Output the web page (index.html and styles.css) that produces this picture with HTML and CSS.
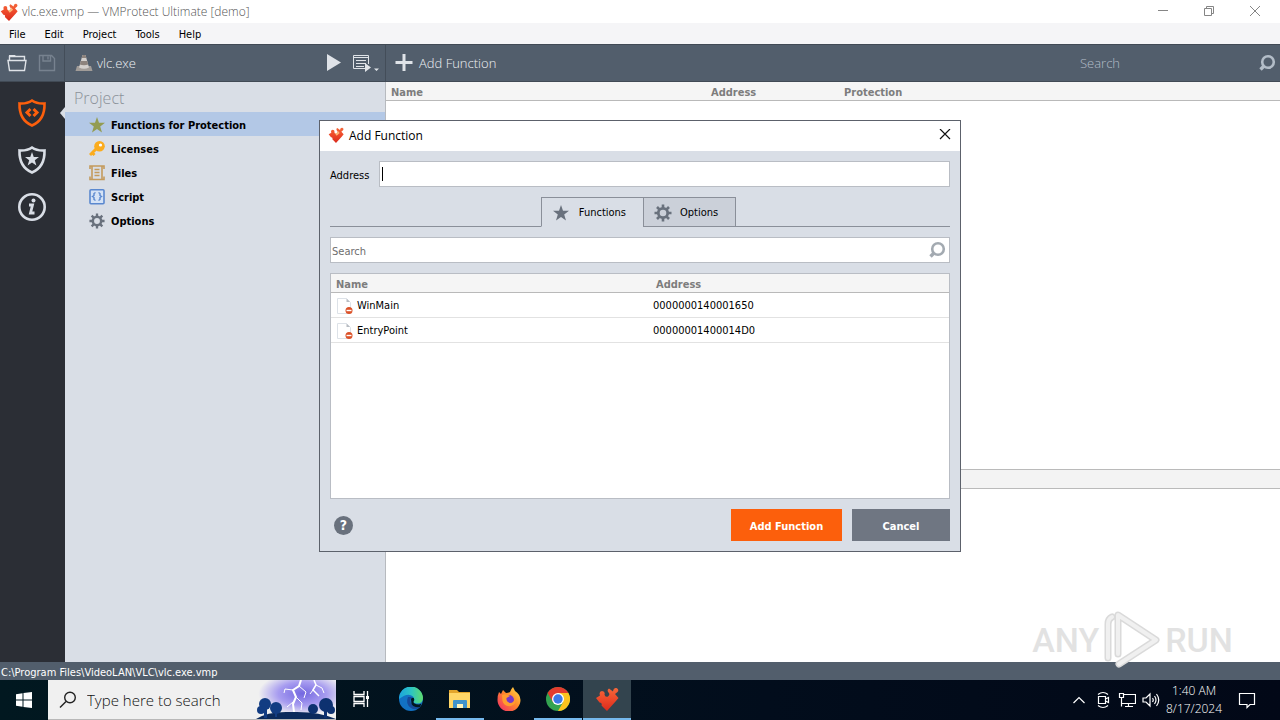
FILE: index.html
```html
<!DOCTYPE html>
<html lang="en">
<head>
<meta charset="utf-8">
<title>vlc.exe.vmp — VMProtect Ultimate [demo]</title>
<link rel="stylesheet" href="styles.css">
</head>
<body>
<svg class="defs" aria-hidden="true">
  <linearGradient id="gPuzzle" x1="0" y1="0" x2="0" y2="1"><stop offset="0" stop-color="#f4683a"/><stop offset=".45" stop-color="#ee4b2b"/><stop offset="1" stop-color="#d92a1c"/></linearGradient>
  <linearGradient id="gEdge" x1="0" y1="0" x2="1" y2="0"><stop offset="0" stop-color="#1ba4dd"/><stop offset=".5" stop-color="#2cc4c4"/><stop offset="1" stop-color="#5fdc6c"/></linearGradient>
  <linearGradient id="gFox" x1="1" y1="0" x2="0" y2="1"><stop offset="0" stop-color="#ffe34a"/><stop offset=".45" stop-color="#ff8a2a"/><stop offset="1" stop-color="#f0246c"/></linearGradient>
  <radialGradient id="gSky" cx=".58" cy=".35" r=".55"><stop offset="0" stop-color="#7468e0"/><stop offset=".55" stop-color="#a79cf0"/><stop offset="1" stop-color="#f0f0f0"/></radialGradient>
  <symbol id="puzzle" viewBox="0 0 24 24">
    <path fill="url(#gPuzzle)" d="M1 11 L5 8.500 Q3.500 4.500 7 4 Q10.500 4.500 9.500 7.500 Q10 10.500 13 9.500 Q15.500 7.500 13.500 5.500 Q11.500 3 14 1.500 L18 4.500 Q18.500 .5 21.500 1 Q24.500 2.500 22.500 5 L20 7 L23.500 11 L20.500 14.500 L12 24 L6.500 18.500 Q7.500 15.500 4.500 15.500 Z"/>
  </symbol>
  <symbol id="puzzle-lit" viewBox="0 0 24 24">
    <use href="#puzzle"/>
    <path fill="#ffd08a" opacity=".8" d="M10 9 Q14 10.500 15 6 L17.500 9 L13 13 Z"/>
  </symbol>
  <symbol id="star" viewBox="0 0 16 16"><path fill="currentColor" d="M8 0 L10 5.700 L16 5.800 L11.200 9.500 L13 15.500 L8 12 L3 15.500 L4.800 9.500 L0 5.800 L6 5.700 Z"/></symbol>
  <symbol id="gear" viewBox="0 0 18 18"><circle cx="9" cy="9" r="4.700" fill="none" stroke="currentColor" stroke-width="2.800"/><path stroke="currentColor" stroke-width="2.600" d="M9 .5V4M9 14V17.500M.5 9H4M14 9H17.500M3 3L5.500 5.500M12.500 12.500L15 15M15 3L12.500 5.500M3 15L5.500 12.500"/></symbol>
  <symbol id="lens" viewBox="0 0 18 18"><circle cx="10" cy="8" r="5.800" fill="none" stroke="currentColor" stroke-width="2.600"/><path stroke="currentColor" stroke-width="3.400" d="M6 12L2.500 15.500"/></symbol>
  <symbol id="shield" viewBox="0 0 30 30"><path fill="none" stroke="currentColor" stroke-width="2.600" stroke-linejoin="miter" d="M15 2.500 Q10 6 2.500 5.500 Q2 22 15 27.500 Q28 22 27.500 5.500 Q20 6 15 2.500 Z"/></symbol>
  <symbol id="doc" viewBox="0 0 18 18"><path fill="#fff" stroke="#dde2e8" d="M1.500 1.500H10.500L14.500 5.500V16.500H1.500Z"/><path fill="#b8bcc2" d="M10.500 1.500V5H14Z"/><circle cx="13" cy="13.500" r="3.500" fill="#dc5228"/><path stroke="#fff" stroke-width="1.400" d="M10.500 13.500H15.500"/></symbol>
</svg>

<div class="app">
  <header class="titlebar">
    <svg class="i18"><use href="#puzzle-lit"/></svg>
    <h1>vlc.exe.vmp — VMProtect Ultimate [demo]</h1>
    <div class="wincontrols">
      <button aria-label="Minimize"><svg class="i12" viewBox="0 0 12 12"><path d="M1 4.500H11"/></svg></button>
      <button aria-label="Restore"><svg class="i12" viewBox="0 0 12 12"><path d="M1.500 2.500H8.500V9.500H1.500ZM3.500 2.500V.5H10.500V7.500H8.500"/></svg></button>
      <button aria-label="Close"><svg class="i12" viewBox="0 0 12 12"><path d="M1 0L11 10M11 0L1 10"/></svg></button>
    </div>
  </header>
  <nav class="menubar">
    <button>File</button><button>Edit</button><button>Project</button><button>Tools</button><button>Help</button>
  </nav>
  <div class="toolbar">
    <div class="tool-files">
      <button aria-label="Open"><svg class="i20" viewBox="0 0 20 20"><path fill="none" stroke="#dfe3e8" stroke-width="1.400" d="M2.500 7V3.500H17.500V7M1 7.500H19L17.500 17.500H2.500Z"/><path fill="#dfe3e8" d="M2 2H8L9.500 4H2Z"/></svg></button>
      <button aria-label="Save"><svg class="i20" viewBox="0 0 20 20"><path fill="none" stroke="#77828f" stroke-width="1.400" d="M2.500 2.500H14.500L17.500 5.500V17.500H2.500ZM6 2.500V8H13.500V2.500M11 3.500V6.500"/></svg></button>
    </div>
    <div class="tool-project">
      <svg class="i18" viewBox="0 0 18 18"><path fill="#a19c98" d="M2 12H16L17.500 17H.5Z"/><path fill="#d4d0cd" d="M7.500 1H10.500L14 13.500Q9 16 4 13.500Z"/><path fill="#8d837d" d="M7.500 1H10.500L11.300 4H6.700ZM5.800 7H12.200L13.200 10.500Q9 12 4.800 10.500Z"/></svg>
      <span class="grow">vlc.exe</span>
      <button aria-label="Run"><svg class="i18" viewBox="0 0 18 18"><path fill="#dfe3e8" d="M2 0L16 8.500L2 17Z"/></svg></button>
      <button aria-label="Run options"><svg class="options-icon" viewBox="0 0 26 18"><path fill="none" stroke="#dfe3e8" d="M12 14.500H.5V1.500H15.500V10M.5 3.500H15.500M3 6.500H13M3 9.500H13M3 12.500H11"/><path fill="#dfe3e8" d="M12 9L18 13.500L12 18ZM21 14.500H26L23.500 17Z"/></svg></button>
    </div>
    <div class="tool-functions">
      <button class="add"><svg class="i18" viewBox="0 0 18 18"><path stroke="#dfe3e8" stroke-width="3" d="M9 0V17M.5 8.500H17.500"/></svg>Add Function</button>
      <label class="tool-search"><input type="text" placeholder="Search" aria-label="Search functions"><svg class="i18"><use href="#lens"/></svg></label>
    </div>
  </div>

  <main class="main">
    <nav class="rail">
      <button class="active" aria-label="Project"><svg class="i30" viewBox="0 0 30 30"><use href="#shield"/><path fill="none" stroke="currentColor" stroke-width="3" d="M13.500 11L10 14.500L13.500 18M16.500 11L20 14.500L16.500 18"/></svg></button>
      <button aria-label="Functions"><svg class="i30" viewBox="0 0 30 30"><use href="#shield"/><use href="#star" x="8" y="7" width="14" height="14"/></svg></button>
      <button aria-label="Information"><svg class="i30" viewBox="0 0 30 30"><circle cx="15" cy="15" r="12.700" fill="none" stroke="currentColor" stroke-width="2.600"/><path fill="none" stroke="currentColor" stroke-width="2.800" d="M12 13H15.500L13.500 21H17.500"/><circle cx="16.500" cy="8.500" r="2" fill="currentColor"/></svg></button>
    </nav>
    <aside class="project">
      <h2>Project</h2>
      <ul>
        <li class="selected"><svg class="i16 olive"><use href="#star"/></svg>Functions for Protection</li>
        <li><svg class="i16" viewBox="0 0 16 16"><path fill="none" stroke="#fbac1e" stroke-width="3" d="M1 14L7.500 7.500M2.500 11L5.500 14"/><circle cx="10.500" cy="5.300" r="5.300" fill="#fbac1e"/><circle cx="11.500" cy="4" r="1.600" fill="#fff"/></svg>Licenses</li>
        <li><svg class="i16" viewBox="0 0 16 16"><path fill="none" stroke="#c49a5c" stroke-width="1.600" d="M1 4V1H3M13 1H15V4M1 11.500V14.500H15V11.500M3 1V14M13 1V14M3 1H13M5.500 4.500H10.500M5.500 7.500H10.500M5.500 10.500H10.500"/></svg>Files</li>
        <li><svg class="i16" viewBox="0 0 16 16"><rect x="1" y=".8" width="14" height="14" rx="1" fill="#d5e3f6" stroke="#5a88cf" stroke-width="1.600"/><path fill="none" stroke="#5a88cf" stroke-width="1.400" d="M6.500 3.500L5 4.500V6.500L3.500 7.500L5 8.500V10.500L6.500 11.500M9.500 3.500L11 4.500V6.500L12.500 7.500L11 8.500V10.500L9.500 11.500"/></svg>Script</li>
        <li><svg class="i16 grey"><use href="#gear"/></svg>Options</li>
      </ul>
    </aside>
    <section class="functions">
      <table class="listhead">
        <thead><tr><th class="c-name">Name</th><th class="c-address">Address</th><th>Protection</th></tr></thead>
      </table>
      <div class="list"></div>
      <div class="splitter"></div>
      <div class="details"></div>
    </section>
  </main>
  <div class="statusbar">C:\Program Files\VideoLAN\VLC\vlc.exe.vmp</div>

  <footer class="taskbar">
    <button class="start" aria-label="Start"><svg class="i16" viewBox="0 0 16 16"><path fill="#fff" d="M0 2.300L6.500 1.300V7.500H0ZM7.500 1.100L16 0V7.500H7.500ZM0 8.500H6.500V14.700L0 13.700ZM7.500 8.500H16V16L7.500 14.900Z"/></svg></button>
    <label class="tasksearch">
      <svg class="i18" viewBox="0 0 18 18"><circle cx="11" cy="6.500" r="5.300" fill="none" stroke="#222" stroke-width="1.400"/><path stroke="#222" stroke-width="1.400" d="M7 10.500L1 16.500"/></svg>
      <input type="text" placeholder="Type here to search" aria-label="Type here to search">
      <svg class="storm" viewBox="0 0 80 39"><rect width="80" height="39" fill="url(#gSky)"/><g fill="none" stroke="#fff"><path stroke-width="2" d="M45 0L43 6L37 10L40 17L37 24L38 32"/><path d="M43 6L50 12L48 18M37 10L29 9L28 13M40 17L46 23L45 30M37 22L31 27"/><path stroke-width="1.500" d="M58 0L60 5L57 10L63 16"/><path d="M60 5L66 8L68 13M57 10L54 14"/></g><path fill="#0b2a5c" d="M0 39Q12 31 35 32Q62 31 80 39Z"/><g fill="#123c82"><circle cx="9" cy="24" r="6"/><circle cx="20" cy="28" r="6"/><circle cx="5" cy="30" r="4"/><path d="M8 26H11V38H8ZM19 28H21V37H19Z"/></g><g fill="#0d3170"><circle cx="70" cy="25" r="7"/><circle cx="57" cy="29" r="5"/><circle cx="75" cy="30" r="4"/><path d="M68 28H71V38H68Z"/></g></svg>
    </label>
    <div class="apps">
      <button aria-label="Task View"><svg class="i18" viewBox="0 0 18 18"><path fill="none" stroke="#fff" stroke-width="1.300" d="M2 1V4.500H12V1M2 17V13.500H12V17M2 6.500H12V11.500H2ZM15.500 1V17"/><path fill="#fff" d="M14 6H17V9H14Z"/></svg></button>
      <button aria-label="Edge"><svg class="i24" viewBox="0 0 24 24"><circle cx="12" cy="12" r="12" fill="#1272c4"/><path fill="url(#gEdge)" d="M0 12A12 12 0 0 1 24 11Q24 16.500 18 16.500Q14 16.500 14.500 14Q16 12 14 9.500Q9 5 0 12Z"/><path fill="#164a9a" d="M9 10Q6 17 12 21Q17 24 21 20Q15 21 12.500 17Q10 13 13 10Z"/><path fill="#021620" d="M12 12Q13 10 14.800 11Q16 13 14.500 14.500Q14 17 20 17.500L22.500 16.500L21 20Q15 21 12.500 17Z"/></svg></button>
      <button class="running" aria-label="File Explorer"><svg class="i24" viewBox="0 0 24 24"><path fill="#e3a52c" d="M1 3H9L11 5H22V12H1Z"/><path fill="#ffd667" d="M1 6H22V21H1Z"/><path fill="#3f92cb" d="M5 14Q5 13 6 13H18Q19 13 19 14V21H15V17H9V21H5Z"/><path fill="#fff3ba" d="M9 17H15V21H9Z"/></svg></button>
      <button aria-label="Firefox"><svg class="i24" viewBox="0 0 24 24"><path fill="url(#gFox)" d="M2 5L4 7L6 3L9 6Q11 6 13 5Q14 2 16 0L18 4Q23 7 23.500 13A11.500 11.500 0 0 1 .5 13Q.5 8 2 5Z"/><circle cx="12" cy="13" r="5" fill="#7838c8"/><path fill="#ff9c2e" d="M5 8Q9 6 13 9L9.500 11Q9 15 13 16Q17 16 18 11Q20 17 14 19Q7 20 5.500 14Z"/></svg></button>
      <button class="running" aria-label="Chrome"><svg class="i24" viewBox="0 0 24 24"><circle cx="12" cy="12" r="12" fill="#33a350"/><path fill="#e33b2e" d="M1.600 6A12 12 0 0 1 22.400 6H12L6.800 15Z"/><path fill="#fcc31e" d="M22.400 6A12 12 0 0 1 12 24L17.200 15L12 6Z"/><circle cx="12" cy="12" r="6" fill="#fff"/><circle cx="12" cy="12" r="4.700" fill="#3c78e6"/></svg></button>
      <button class="running current" aria-label="VMProtect"><svg class="i24"><use href="#puzzle"/></svg></button>
    </div>
    <div class="tray">
      <svg class="i18" viewBox="0 0 18 18"><path d="M3.500 12L9 6.500L14.500 12"/></svg>
      <svg class="i18" viewBox="0 0 18 18"><path d="M4 3.500Q9 -.5 14 3.500M4 14.500Q9 18.500 14 14.500M4.500 5.500H11.500V12.500H4.500ZM11.500 8L14.500 6.500V11.500L11.500 10"/></svg>
      <svg class="i18" viewBox="0 0 18 18"><path d="M6 3.500H17.500V12.500H4M10.500 12.500V15.500M7 15.500H15M1.500 2.500H5.500V6.500H1.500ZM3.500 6.500V15.500"/></svg>
      <svg class="i18" viewBox="0 0 18 18"><path d="M1 7H4L8 3V15L4 11H1ZM10.500 7Q12 9 10.500 11M12.500 5Q15.500 9 12.500 13M14.500 3Q19 9 14.500 15"/></svg>
      <time class="clock"><span>1:40 AM</span><span>8/17/2024</span></time>
      <svg class="i18 notify" viewBox="0 0 18 18"><path d="M1.500 2.500H16.500V13.500H12L9 16.500V13.500H1.500Z"/></svg>
    </div>
  </footer>

  <div class="watermark" aria-hidden="true">
    <span>ANY</span>
    <svg viewBox="0 0 58 64"><path fill="none" stroke="#dadada" stroke-width="7" stroke-linejoin="round" stroke-linecap="round" d="M5 50V16Q5 11 9 9M15 46V7L53 32L16 56"/><path fill="none" stroke="#f0f0f0" stroke-width="4" stroke-linejoin="round" stroke-linecap="round" d="M5 50V16Q5 11 9 9M15 46V7L53 32L16 56"/></svg>
    <span>RUN</span>
  </div>

  <div class="dialog" role="dialog" aria-label="Add Function">
    <header class="dialog-title">
      <svg class="i16"><use href="#puzzle-lit"/></svg>
      <h2>Add Function</h2>
      <button aria-label="Close dialog"><svg class="i12" viewBox="0 0 12 12"><path d="M1 0L11 10M11 0L1 10"/></svg></button>
    </header>
    <div class="dialog-body">
      <div class="address">
        <label for="address">Address</label>
        <div class="field"><input id="address" type="text"><i class="caret"></i></div>
      </div>
      <div class="tabs" role="tablist">
        <button class="tab on" role="tab" aria-selected="true"><svg class="i18" viewBox="0 0 18 18"><use href="#star" x="1" y="1" width="16" height="16"/></svg>Functions</button>
        <button class="tab" role="tab" aria-selected="false"><svg class="i18"><use href="#gear"/></svg>Options</button>
      </div>
      <label class="search"><input type="text" placeholder="Search" aria-label="Search"><svg class="i18"><use href="#lens"/></svg></label>
      <div class="results">
        <table>
          <thead><tr><th class="r-name">Name</th><th>Address</th></tr></thead>
          <tbody>
            <tr><td><span class="fn"><svg class="i18"><use href="#doc"/></svg>WinMain</span></td><td>0000000140001650</td></tr>
            <tr><td><span class="fn"><svg class="i18"><use href="#doc"/></svg>EntryPoint</span></td><td>00000001400014D0</td></tr>
          </tbody>
        </table>
      </div>
      <div class="actions">
        <button class="help" aria-label="Help">?</button>
        <button class="primary">Add Function</button>
        <button class="cancel">Cancel</button>
      </div>
    </div>
  </div>
</div>
</body>
</html>
```
FILE: styles.css
```css
* { box-sizing: border-box; }
body { margin: 0; font: 11px "DejaVu Sans Condensed", "DejaVu Sans", sans-serif; color: #000; }
button { margin: 0; padding: 0; border: 0; background: none; font: inherit; color: inherit; }
input { min-width: 0; border: 0; outline: 0; background: transparent; font: inherit; color: inherit; }
input::placeholder { color: inherit; opacity: 1; }
h1, h2, ul { margin: 0; padding: 0; font: inherit; list-style: none; }
svg { display: block; flex: none; }
table { width: 100%; border-collapse: separate; border-spacing: 0; table-layout: fixed; }
th, td { padding: 0; text-align: left; }
.defs { position: absolute; width: 0; height: 0; }
.i12 { width: 12px; height: 12px; }
.i16 { width: 16px; height: 16px; }
.i18 { width: 18px; height: 18px; }
.i20 { width: 20px; height: 20px; }
.i24 { width: 24px; height: 24px; }
.i30 { width: 30px; height: 30px; }

.app { position: relative; display: flex; flex-direction: column; min-height: 100vh; background: #fff; overflow: hidden; }

.titlebar { display: flex; align-items: center; gap: 4px; height: 23px; color: #555; }
.titlebar h1 { flex: 1; font: 300 12px "Open Sans", sans-serif; }
.wincontrols { display: flex; padding-right: 2px; }
.wincontrols button { display: grid; place-items: center; width: 46px; height: 22px; }
.wincontrols path { fill: none; stroke: #858585; }
.menubar { display: flex; align-items: center; gap: 19px; height: 21px; padding: 2px 0 0 9px; background: #f5f5f7; }

.toolbar { display: flex; height: 38px; background: #525e6c; border: solid #414a55; border-width: 1px 0; color: #eef1f5; font: 300 13px "Open Sans", sans-serif; }
.toolbar > div { display: flex; align-items: center; }
.tool-files { width: 65px; padding-left: 7px; gap: 10px; border-right: 1px solid #434d59; }
.tool-project { width: 321px; padding: 0 6px 0 10px; gap: 4px; border-right: 1px solid #434d59; }
.tool-project button { margin-left: 6px; }
.options-icon { width: 26px; height: 18px; }
.grow { flex: 1; }
.tool-functions { flex: 1; justify-content: space-between; padding: 0 4px 0 9px; }
.add { display: flex; align-items: center; gap: 6px; }
.tool-search { display: flex; align-items: center; width: 196px; color: #b3bdc8; }
.tool-search input { flex: 1; padding: 0; }

.main { display: flex; flex: 1; }
.rail { display: flex; flex-direction: column; align-items: center; gap: 17px; width: 65px; padding: 16px 1px 0 0; background: #2b2e35; color: #d9dee6; }
.rail button { position: relative; }
.rail .active { color: #fc5f0c; }
.rail .active::after { content: ""; position: absolute; top: 9px; right: -18px; border: solid transparent; border-width: 6px 5px 6px 0; border-right-color: #d9dee6; }
.project { width: 321px; background: #d9dee6; border-right: 1px solid #b7babf; }
.project h2 { height: 30px; padding: 4px 9px; color: #8b9199; font: 300 16px/24px "Open Sans", sans-serif; }
.project li { display: flex; align-items: center; gap: 6px; height: 24px; padding: 2px 0 0 24px; font-weight: bold; }
.project .selected { background: #b3c8e6; }
.olive { color: #939c52; }
.grey { color: #69717d; }
.functions { display: flex; flex: 1; flex-direction: column; }
.listhead th { height: 19px; padding-top: 2px; background: #f5f5f5; border-bottom: 1px solid #b9b9b9; color: #7d7d7d; }
.listhead th:first-child { padding-left: 5px; }
.c-name { width: 325px; }
.c-address { width: 133px; }
.list { flex: 368; }
.splitter { height: 20px; background: #f3f3f3; border: solid #bababa; border-width: 1px 0; }
.details { flex: 173; }
.statusbar { height: 18px; padding-left: 1px; background: #525e6c; color: #fff; line-height: 21px; }

.taskbar { display: flex; height: 40px; background: linear-gradient(90deg, #011820, #020d1c 60%, #020817); color: #fff; }
.start { display: grid; place-items: center; width: 48px; }
.tasksearch { display: flex; align-items: center; width: 288px; padding-left: 11px; gap: 8px; background: #f0f0f0; border-bottom: 1px solid #b8b8b8; color: #111; font: 300 15px "Open Sans", sans-serif; }
.tasksearch input { flex: 1; }
.storm { width: 80px; height: 39px; }
.apps { display: flex; gap: 1px; }
.apps button { display: grid; place-items: center; width: 48px; border-bottom: 2px solid transparent; }
.apps button:first-child { width: 50px; }
.apps .running { border-bottom-color: #76b9ed; }
.apps .current { background: #33444e; }
.tray { display: flex; align-items: center; gap: 6px; margin-left: auto; padding-right: 24px; }
.tray path { fill: none; stroke: #fff; stroke-width: 1.2; }
.clock { display: flex; flex-direction: column; align-items: center; width: 56px; font: 300 12px/18px "Open Sans", sans-serif; white-space: nowrap; }
.notify { margin-left: 10px; }

.watermark { position: absolute; right: 47px; bottom: 48px; display: flex; align-items: center; gap: 4px; color: #e2e2e2; font: 500 34px/64px Roboto, sans-serif; }
.watermark svg { width: 58px; height: 64px; }

.dialog { position: absolute; left: 25%; top: 120px; width: 642px; margin-left: -1px; border: 1px solid #5c616b; background: #d9dee6; }
.dialog-title { display: flex; align-items: center; gap: 5px; height: 30px; padding: 0 9px 2px 8px; background: #fff; }
.dialog-title h2 { flex: 1; font: 12px "Open Sans", sans-serif; }
.dialog-title button path { fill: none; stroke: #111; stroke-width: 1.2; }
.dialog-body { display: flex; flex-direction: column; gap: 10px; padding: 10px; }
.address { display: flex; align-items: center; gap: 10px; }
.address label { width: 39px; padding-top: 2px; }
.field { position: relative; flex: 1; }
.field input { display: block; width: 100%; height: 26px; background: #fff; border: 1px solid #b9bdc4; }
.caret { position: absolute; left: 3px; top: 6px; width: 1px; height: 14px; background: #000; }
.tabs { display: flex; justify-content: center; height: 30px; padding-right: 3px; border-bottom: 1px solid #8a8f99; }
.tab { display: flex; align-items: center; gap: 8px; height: 30px; padding: 1px 17px 0 10px; border: 1px solid #8a8f99; background: #cbd0d9; }
.tab svg { color: #69717d; }
.tab.on { gap: 9px; border-right: 0; border-bottom-color: #d9dee6; background: #d9dee6; }
.search { display: flex; align-items: center; height: 26px; padding: 0 3px 0 0; background: #fff; border: 1px solid #b9bdc4; color: #6d6d6d; }
.search input { flex: 1; padding: 2px 1px 0; }
.search svg { color: #a3aab1; }
.results { height: 226px; background: #fff; border: 1px solid #b9bdc4; }
.results th { height: 19px; padding: 2px 0 0 5px; background: #f5f5f5; border-bottom: 1px solid #b9b9b9; color: #7d7d7d; }
.results td { height: 25px; padding: 1px 0 0 2px; border-bottom: 1px solid #e2e2e2; }
.r-name { width: 320px; }
.fn { display: flex; align-items: center; gap: 3px; padding-left: 3px; }
.actions { display: flex; align-items: center; gap: 10px; height: 32px; font-weight: bold; color: #fff; }
.help { width: 19px; height: 19px; margin: 0 auto 0 4px; border-radius: 50%; background: #69717d; font-size: 14px; }
.primary, .cancel { height: 32px; padding-top: 2px; }
.primary { width: 111px; background: #fc5f0c; }
.cancel { width: 98px; background: #6f7682; }
```
